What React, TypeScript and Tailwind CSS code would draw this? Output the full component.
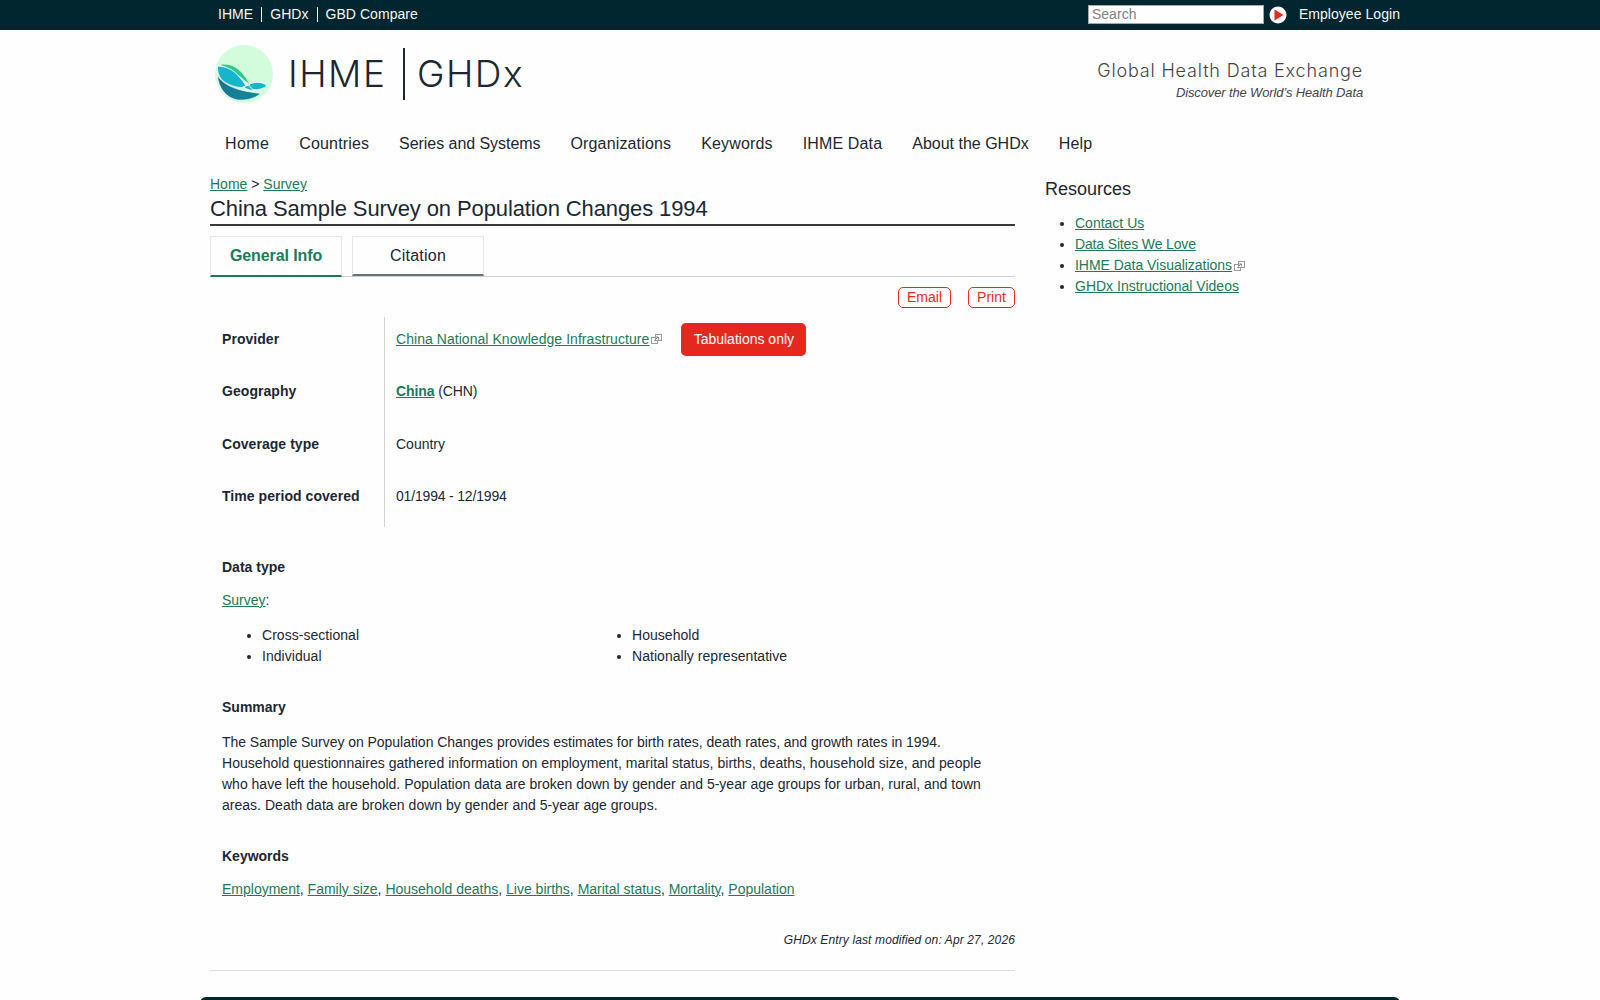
const FONT = "font-['Liberation_Sans',Arial,sans-serif]";

function ExtIcon() {
  return (
    <svg width="11" height="10" viewBox="0 0 11 10" fill="none" stroke="#9a9a9a" strokeWidth="1" className="inline-block ml-[2px] align-[-1px]">
      <rect x="0.5" y="3.5" width="6" height="6" />
      <rect x="4.5" y="0.5" width="6" height="6" fill="#fefefe" />
      <path d="M3 7 L7 3 M5 3 H7.5 V5.5" stroke="#8a8a8a" />
    </svg>
  );
}

function Logo() {
  return (
    <svg width="58" height="58" viewBox="33 21 174 174" className="shrink-0">
      <defs>
        <linearGradient id="deep" x1="0" y1="0" x2="1" y2="1">
          <stop offset="0" stopColor="#1c6f8d" />
          <stop offset="1" stopColor="#0f8a9c" />
        </linearGradient>
      </defs>
      <circle cx="120" cy="108" r="87" fill="#d3fcdc" />
      <path d="M50 80 C84 76 112 92 136 138 C112 118 86 94 50 80 Z" fill="#2fc98a" />
      <path d="M40 84 C82 84 106 112 127 145 C108 154 76 144 56 128 C46 118 40 106 40 84 Z" fill="#15b5cc" stroke="#fff" strokeWidth="2.5" />
      <path d="M134 141 C148 131 172 129 189 143 C172 157 150 157 143 153 Z" fill="#15b5cc" stroke="#fff" strokeWidth="2.5" />
      <path d="M118 147 L133 141 L149 157 C140 158 128 154 118 147 Z" fill="#15b5cc" stroke="#fff" strokeWidth="2.5" />
      <path d="M40 112 C60 144 105 160 170 166 C152 183 125 188 100 186 C66 180 43 150 40 112 Z" fill="url(#deep)" stroke="#fff" strokeWidth="2" />
    </svg>
  );
}

function A({ children, bold }: { children: React.ReactNode; bold?: boolean }) {
  return <a href="#" className={`text-[#1b7a58] underline ${bold ? "font-bold" : ""}`}>{children}</a>;
}

const NAV = [
  { label: "Home", cls: "tracking-[0.4px]" },
  { label: "Countries", cls: "tracking-[0.15px]" },
  { label: "Series and Systems", cls: "tracking-[-0.05px]" },
  { label: "Organizations", cls: "tracking-[0.15px]" },
  { label: "Keywords", cls: "tracking-[0.15px]" },
  { label: "IHME Data", cls: "tracking-[0.15px]" },
  { label: "About the GHDx", cls: "tracking-[0px]" },
  { label: "Help", cls: "tracking-[0.15px]" },
];

function Row({ label, children }: { label: string; children: React.ReactNode }) {
  return (
    <div className="flex h-[52.5px] items-center">
      <div className="w-[174px] shrink-0 pb-2 pl-3 font-bold tracking-[0.05px]">{label}</div>
      <div className="flex h-full flex-1 items-center border-l border-[#d0d0d0] pb-2 pl-[11px]">{children}</div>
    </div>
  );
}

export default function App() {
  return (
    <div className={`${FONT} h-[1000px] overflow-hidden bg-[#fefefe] text-[14px] leading-[21px] text-[#1c2731]`}>
      <div className="h-[30px] bg-[#022630] pb-px text-[#f4f6f6]">
        <div className="mx-auto flex h-full w-[1200px] items-center tracking-[0.05px]">
          <div className="flex items-center pl-[18px]">
            <span className="pr-2">IHME</span>
            <span className="border-l border-white pl-2 pr-2 leading-[15px]">GHDx</span>
            <span className="border-l border-white pl-2 leading-[15px]">GBD Compare</span>
          </div>
          <div className="ml-auto flex items-center">
            <input
              readOnly
              placeholder="Search"
              className="h-[19px] w-[176px] border border-[#a9a9a9] bg-white px-[3px] text-[14px] placeholder:text-[#808080]"
            />
            <svg width="18" height="18" viewBox="0 0 18 18" className="ml-[5px]">
              <circle cx="9" cy="9" r="8.5" fill="#fff" />
              <path d="M5.5 3.5 L14.5 9 L5.5 14.5 Z" fill="#e5281d" />
            </svg>
            <span className="ml-[12px]">Employee Login</span>
          </div>
        </div>
      </div>

      <div className="mx-auto w-[1200px]">
        <div className="flex h-[88px] items-center justify-between pl-[15px] pr-[37px]">
          <div className="flex items-center">
            <Logo />
            <span className="ml-[15px] font-['Inter',sans-serif] text-[37px] font-light leading-[52px] tracking-[1.5px] text-[#1c2731]">IHME</span>
            <span className="ml-[17px] h-[52px] w-[2px] bg-[#1c2731]" />
            <span className="ml-[11.5px] font-['Inter',sans-serif] text-[37px] font-light leading-[52px] tracking-[1.5px] text-[#1c2731]">GHDx</span>
          </div>
          <div className="pt-[12px] text-right">
            <div className="font-['Inter',sans-serif] text-[18px] font-light leading-[26px] tracking-[0.83px] text-[#444]">Global Health Data Exchange</div>
            <div className="text-[13px] italic leading-[18px] tracking-[-0.13px] text-[#444]">Discover the World’s Health Data</div>
          </div>
        </div>

        <nav className="mt-[10px] flex h-[30px] items-center pl-[10px] text-[16px]">
          {NAV.map((n) => (
            <span key={n.label} className={`px-[15px] ${n.cls}`}>{n.label}</span>
          ))}
        </nav>

        <div className="mt-[16px] flex pl-[10px]">
          <main className="w-[805px] shrink-0 pt-px">
            <div className="leading-[18px]"><A>Home</A> &gt; <A>Survey</A></div>
            <h1 className="border-b-2 border-[#3a3a3a] pt-px text-[22px] font-normal leading-[30px] tracking-[-0.11px]">China Sample Survey on Population Changes 1994</h1>

            <div className="mt-[10px] flex gap-[10px] border-b border-[#cfcfcf] text-[16px]">
              <div className="-mb-px flex h-[41px] w-[132px] items-center justify-center border border-b-2 border-[#e6e6e6] border-b-[#1b7a58] pb-px font-bold tracking-[-0.1px] text-[#1b7a58]">General Info</div>
              <div className="flex h-[40px] w-[132px] items-center justify-center border border-b-2 border-[#e6e6e6] border-b-[#66747c] tracking-[0.25px]">Citation</div>
            </div>

            <div className="mt-[10px] flex justify-end gap-[17px] text-[#e5281d]">
              <span className="flex h-[21px] w-[53px] items-center justify-center rounded-[5px] border border-[#e5281d]">Email</span>
              <span className="flex h-[21px] w-[47px] items-center justify-center rounded-[5px] border border-[#e5281d]">Print</span>
            </div>

            <div className="mt-[9px]">
              <Row label="Provider">
                <span className="tracking-[0.05px]"><A>China National Knowledge Infrastructure</A></span>
                <ExtIcon />
                <span className="ml-[19px] flex h-[33px] w-[125px] items-center justify-center rounded-[5px] bg-[#e5281d] text-white">Tabulations only</span>
              </Row>
              <Row label="Geography">
                <span className="tracking-[-0.1px]"><A bold>China</A> (CHN)</span>
              </Row>
              <Row label="Coverage type">Country</Row>
              <Row label="Time period covered"><span className="tracking-[-0.18px]">01/1994 - 12/1994</span></Row>
            </div>

            <div className="px-3">
              <div className="mt-[30px] font-bold">Data type</div>
              <div className="mt-[12px]"><A>Survey</A>:</div>
              <ul className="mt-[14px] grid list-disc grid-cols-[370px_1fr] pl-10 tracking-[0.04px]">
                <li>Cross-sectional</li>
                <li className="ml-0">Household</li>
                <li>Individual</li>
                <li>Nationally representative</li>
              </ul>
              <div className="mt-[30px] font-bold">Summary</div>
              <p className="mt-[14px] w-[760px]">
                <span className="tracking-[-0.035px]">The Sample Survey on Population Changes provides estimates for birth rates, death rates, and growth rates in 1994.</span>{" "}
                <span className="tracking-[0.037px]">Household questionnaires gathered information on employment, marital status, births, deaths, household size, and people</span>{" "}
                who have left the household. Population data are broken down by gender and 5-year age groups for urban, rural, and town{" "}
                <span className="tracking-[0.02px]">areas. Death data are broken down by gender and 5-year age groups.</span>
              </p>
              <div className="mt-[30px] font-bold">Keywords</div>
              <div className="mt-[12px]">
                <A>Employment</A>, <A>Family size</A>, <A>Household deaths</A>, <A>Live births</A>, <A>Marital status</A>, <A>Mortality</A>, <A>Population</A>
              </div>
            </div>

            <div className="mt-[30px] pr-0 text-right text-[12px] italic leading-[21px] tracking-[0.12px]">GHDx Entry last modified on: Apr 27, 2026</div>
            <div className="mt-[19px] border-t border-[#dddddd]" />
          </main>

          <aside className="ml-[30px] mt-[2px] w-[340px]">
            <h2 className="text-[18px] font-normal leading-[26px]">Resources</h2>
            <ul className="mt-[11px] list-disc pl-[30px]">
              <li><A>Contact Us</A></li>
              <li><span className="tracking-[-0.15px]"><A>Data Sites We Love</A></span></li>
              <li><span className="tracking-[-0.03px]"><A>IHME Data Visualizations</A></span><ExtIcon /></li>
              <li><A>GHDx Instructional Videos</A></li>
            </ul>
          </aside>
        </div>

        <div className="mt-[26px] h-[6px] rounded-t-[6px] bg-[#022630]" />
      </div>
    </div>
  );
}
